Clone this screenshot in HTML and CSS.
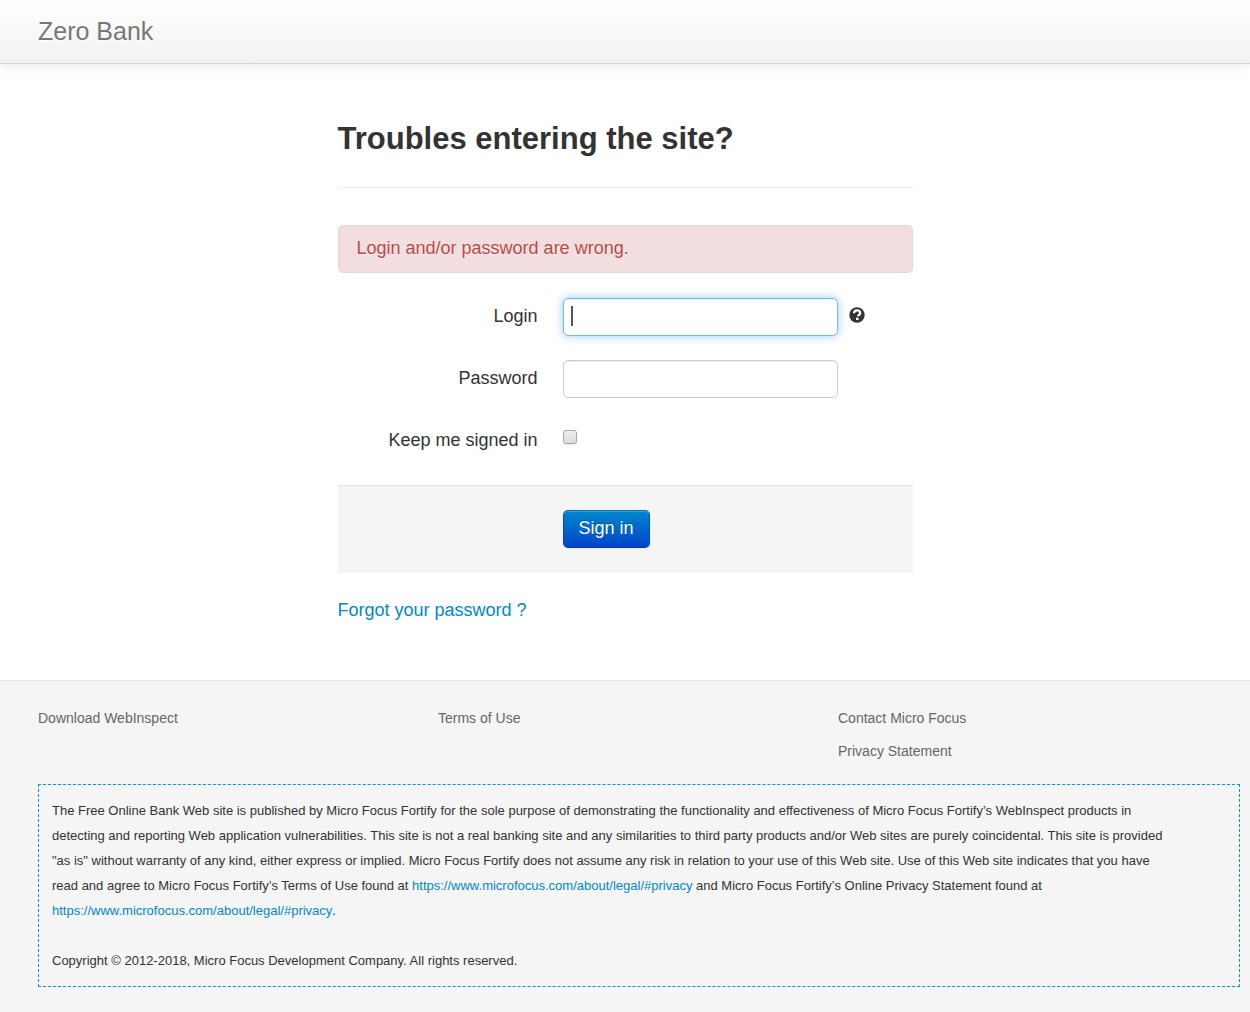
FILE: index.html
```html
<!DOCTYPE html>
<html lang="en">
<head>
<meta charset="utf-8">
<meta name="viewport" content="width=device-width, initial-scale=1">
<title>Zero Bank - Log in</title>
<link rel="stylesheet" href="styles.css">
</head>
<body>
<header class="navbar">
  <a class="brand" href="#">Zero Bank</a>
</header>

<main class="login">
  <h1 class="login-title">Troubles entering the site?</h1>
  <div class="alert" role="alert">Login and/or password are wrong.</div>
  <form class="login-form">
    <div class="field">
      <label class="field-label" for="login">Login</label>
      <input class="text-input is-active" type="text" id="login" name="login" autocomplete="off">
      <svg class="help-icon" viewBox="0 0 16 16" role="img" aria-label="Help">
        <circle cx="8" cy="8" r="7.7" fill="#333"/>
        <path d="M5 6.2C5.1 4.2 6.2 3.3 8 3.3s3.100 1 3.100 2.600C11.100 8 9 8 9 9.300" fill="none" stroke="#fff" stroke-width="2.300"/>
        <rect x="7" y="10.700" width="2.600" height="2.300" fill="#fff"/>
      </svg>
    </div>
    <div class="field">
      <label class="field-label" for="password">Password</label>
      <input class="text-input" type="password" id="password" name="password">
    </div>
    <div class="field">
      <label class="field-label" for="remember">Keep me signed in</label>
      <input class="checkbox" type="checkbox" id="remember" name="remember">
    </div>
    <div class="form-actions">
      <button class="btn" type="submit">Sign in</button>
    </div>
  </form>
  <a class="forgot" href="#">Forgot your password ?</a>
</main>

<footer class="footer">
  <div class="footer-links">
    <ul class="link-list">
      <li><a href="#">Download WebInspect</a></li>
    </ul>
    <ul class="link-list">
      <li><a href="#">Terms of Use</a></li>
    </ul>
    <ul class="link-list">
      <li><a href="#">Contact Micro Focus</a></li>
      <li><a href="#">Privacy Statement</a></li>
    </ul>
  </div>
  <div class="disclaimer">
    <p>The Free Online Bank Web site is published by Micro Focus Fortify for the sole purpose of demonstrating the functionality and effectiveness of Micro Focus Fortify’s WebInspect products in detecting and reporting Web application vulnerabilities. This site is not a real banking site and any similarities to third party products and/or Web sites are purely coincidental. This site is provided "as is" without warranty of any kind, either express or implied. Micro Focus Fortify does not assume any risk in relation to your use of this Web site. Use of this Web site indicates that you have read and agree to Micro Focus Fortify’s Terms of Use found at <a href="#">https://www.microfocus.com/about/legal/#privacy</a> and Micro Focus Fortify’s Online Privacy Statement found at <a class="own-line" href="#">https://www.microfocus.com/about/legal/#privacy</a>.</p>
    <p>Copyright © 2012-2018, Micro Focus Development Company. All rights reserved.</p>
  </div>
</footer>
</body>
</html>
```

FILE: styles.css
```css
* {
  box-sizing: border-box;
}

body {
  margin: 0;
  background: #fff;
  color: #333;
  font-family: "Liberation Sans", Arial, sans-serif;
  font-size: 18px;
  line-height: 25px;
}

a {
  color: #0088cc;
  text-decoration: none;
}

.navbar {
  padding: 19px 38px;
  border-bottom: 1px solid #d4d4d4;
  background: linear-gradient(#fff, #f2f2f2);
  box-shadow: 0 1px 12px rgba(0, 0, 0, 0.1);
}

.brand {
  display: block;
  color: #777;
  font-size: 25px;
  line-height: 25px;
  text-shadow: 0 1px 0 #fff;
}

.login {
  max-width: 575px;
  margin: 0 auto;
  padding: 50px 0 57px;
}

.login-title {
  margin: 0 0 37px;
  padding-bottom: 23px;
  border-bottom: 1px solid #eee;
  font-size: 31px;
  line-height: 50px;
}

.alert {
  margin-bottom: 25px;
  padding: 10px 18px 12px;
  border: 1px solid #eed3d7;
  border-radius: 5px;
  background: #f2dede;
  color: #b94a48;
  text-shadow: 0 1px 0 rgba(255, 255, 255, 0.5);
  line-height: 24px;
}

.login-form {
  margin: 0 0 25px;
}

.field {
  display: flex;
  align-items: flex-start;
  min-height: 38px;
}

.field + .field {
  margin-top: 24px;
}

.field-label {
  width: 200px;
  margin-right: 25px;
  padding-top: 6px;
  text-align: right;
}

.text-input {
  width: 275px;
  height: 38px;
  padding: 5px 8px;
  border: 1px solid #ccc;
  border-radius: 5px;
  background-color: #fff;
  box-shadow: inset 0 1px 1px rgba(0, 0, 0, 0.075);
  color: #555;
  font: inherit;
  outline: 0;
}

/* Active field: blue glow and insertion bar */
.is-active {
  border-color: #75b9f0;
  background: linear-gradient(#555, #555) 7px 7px / 2px 20px no-repeat #fff;
  box-shadow: inset 0 1px 1px rgba(0, 0, 0, 0.075), 0 0 10px rgba(82, 168, 236, 0.6);
}

.help-icon {
  width: 16px;
  height: 16px;
  margin: 9px 0 0 11px;
}

.checkbox {
  appearance: none;
  width: 14px;
  height: 14px;
  margin: 8px 0 0;
  border: 1px solid #a9a9a9;
  border-radius: 3px;
  background: linear-gradient(#eee, #dcdcdc);
  box-shadow: 0 1px 1px rgba(0, 0, 0, 0.1);
}

.form-actions {
  margin-top: 25px;
  padding: 24px 25px 25px 225px;
  border-top: 1px solid #e5e5e5;
  background: #f5f5f5;
}

.btn {
  display: block;
  height: 38px;
  padding: 0 15px 2px;
  border: 1px solid;
  border-color: #006bb0 #0050b0 #003ca0;
  border-radius: 5px;
  background: linear-gradient(#0088cc, #0044cc);
  box-shadow: inset 0 1px 0 rgba(255, 255, 255, 0.2), 0 1px 2px rgba(0, 0, 0, 0.05);
  color: #fff;
  font: inherit;
  text-shadow: 0 -1px 0 rgba(0, 0, 0, 0.25);
}

.forgot {
  display: block;
}

.footer {
  padding: 25px 10px 25px 38px;
  border-top: 1px solid #e5e5e5;
  background: #f5f5f5;
  font-size: 14px;
}

.footer-links {
  display: grid;
  grid-template-columns: repeat(3, minmax(0, 400px));
  margin-bottom: 20px;
}

.link-list {
  display: grid;
  gap: 8px;
  align-content: start;
  margin: 0;
  padding: 0;
  list-style: none;
}

.link-list a {
  color: #666;
}

.disclaimer {
  padding: 13px;
  border: 1px dashed #0099d8;
  font-size: 13px;
}

.disclaimer p {
  max-width: 1120px;
  margin: 0;
}

.disclaimer p + p {
  margin-top: 25px;
}

.own-line {
  display: inline-block;
}
```
